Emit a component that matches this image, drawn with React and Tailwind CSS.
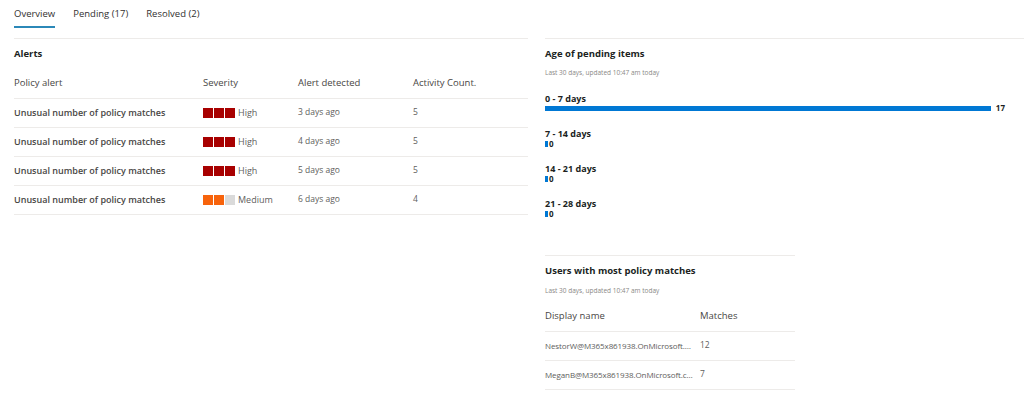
import React from 'react'

const tabs = ['Overview', 'Pending (17)', 'Resolved (2)']

const alerts = [
  { name: 'Unusual number of policy matches', severity: 'high', detected: '3 days ago', count: 5 },
  { name: 'Unusual number of policy matches', severity: 'high', detected: '4 days ago', count: 5 },
  { name: 'Unusual number of policy matches', severity: 'high', detected: '5 days ago', count: 5 },
  { name: 'Unusual number of policy matches', severity: 'medium', detected: '6 days ago', count: 4 },
]

const buckets = [
  { label: '0 - 7 days', value: 17 },
  { label: '7 - 14 days', value: 0 },
  { label: '14 - 21 days', value: 0 },
  { label: '21 - 28 days', value: 0 },
]

const users = [
  { name: 'NestorW@M365x861938.OnMicrosoft.com', matches: 12 },
  { name: 'MeganB@M365x861938.OnMicrosoft.com', matches: 7 },
]

const Severity = ({ level }) => {
  const high = level === 'high'
  const on = high ? 'bg-[#a80000]' : 'bg-[#f7630c]'
  return (
    <div className="flex items-center gap-[3px]">
      <div className="flex gap-[1px]">
        <span className={`h-[10px] w-[10px] ${on}`} />
        <span className={`h-[10px] w-[10px] ${on}`} />
        <span className={`h-[10px] w-[10px] ${high ? on : 'bg-[#dadada]'}`} />
      </div>
      <span className="text-[9px] text-[#605e5c]">{high ? 'High' : 'Medium'}</span>
    </div>
  )
}

const AgeBucket = ({ label, value }) => (
  <div className="h-[35px]">
    <div className="text-[9px] font-bold leading-[10px] text-[#201f1e]">{label}</div>
    {value > 0 ? (
      <div className="flex items-center gap-[5px]">
        <div className="h-[5px] flex-1 bg-[#0078d4]" />
        <span className="text-[8px] font-bold leading-[8px] text-[#201f1e]">{value}</span>
      </div>
    ) : (
      <div className="flex items-center gap-[1px]">
        <div className="h-[6px] w-[3px] bg-[#0078d4]" />
        <span className="text-[8px] font-bold leading-[9px] text-[#201f1e]">{value}</span>
      </div>
    )}
  </div>
)

export default function App() {
  return (
    <div className="h-[414px] w-[1024px] overflow-hidden bg-white font-['Open_Sans',sans-serif] text-[#323130]">
      <div className="flex h-[38px] gap-[18px] px-[14px]">
        {tabs.map((t, i) => (
          <div key={t} className="flex flex-col pt-[7px]">
            <span className="text-[9.5px] leading-[14px] text-[#323130]">{t}</span>
            {i === 0 && <span className="mt-[5px] h-[2px] bg-[#2b88b8]" />}
          </div>
        ))}
      </div>

      <div className="flex">
        <section className="ml-[14px] w-[514px] border-t border-[#edebe9]">
          <h2 className="pt-[8px] text-[9.5px] font-bold leading-[14px] text-[#201f1e]">Alerts</h2>
          <table className="mt-[8px] w-full text-left">
            <thead>
              <tr className="h-[29px] border-b border-[#edebe9] text-[9.5px] text-[#484644]">
                <th className="w-[189px] pb-[1px] font-normal">Policy alert</th>
                <th className="w-[95px] pb-[1px] font-normal">Severity</th>
                <th className="w-[115px] pb-[1px] font-normal">Alert detected</th>
                <th className="pb-[1px] font-normal">Activity Count.</th>
              </tr>
            </thead>
            <tbody>
              {alerts.map((a, i) => (
                <tr key={i} className="h-[29px] border-b border-[#edebe9] text-[8.5px] text-[#605e5c]">
                  <td className="text-[9px] font-semibold text-[#484644]">{a.name}</td>
                  <td>
                    <Severity level={a.severity} />
                  </td>
                  <td>{a.detected}</td>
                  <td>{a.count}</td>
                </tr>
              ))}
            </tbody>
          </table>
        </section>

        <section className="ml-[17px] flex-1 border-t border-[#edebe9]">
          <div className="pr-[19px]">
            <h2 className="pt-[8px] text-[9.5px] font-bold leading-[14px] text-[#201f1e]">Age of pending items</h2>
            <p className="mt-[8px] text-[6.5px] leading-[8px] text-[#8a8886]">Last 30 days, updated 10:47 am today</p>
            <div className="mt-[17px]">
              {buckets.map((b) => (
                <AgeBucket key={b.label} {...b} />
              ))}
            </div>
          </div>

          <div className="mt-[21px] w-[250px] border-t border-[#edebe9]">
            <h2 className="pt-[8px] text-[9.5px] font-bold leading-[14px] text-[#201f1e]">Users with most policy matches</h2>
            <p className="mt-[9px] text-[6.5px] leading-[8px] text-[#8a8886]">Last 30 days, updated 10:47 am today</p>
            <table className="mt-[7px] w-full table-fixed text-left">
              <thead>
                <tr className="h-[29px] border-b border-[#edebe9] text-[9.5px] text-[#484644]">
                  <th className="w-[155px] font-normal">Display name</th>
                  <th className="font-normal">Matches</th>
                </tr>
              </thead>
              <tbody>
                {users.map((u) => (
                  <tr key={u.name} className="h-[29px] border-b border-[#edebe9] text-[8.5px] text-[#605e5c]">
                    <td className="overflow-hidden pr-[6px]">
                      <div className="truncate text-[8px] tracking-[-0.1px]">{u.name}</div>
                    </td>
                    <td>{u.matches}</td>
                  </tr>
                ))}
              </tbody>
            </table>
          </div>
        </section>
      </div>
    </div>
  )
}
